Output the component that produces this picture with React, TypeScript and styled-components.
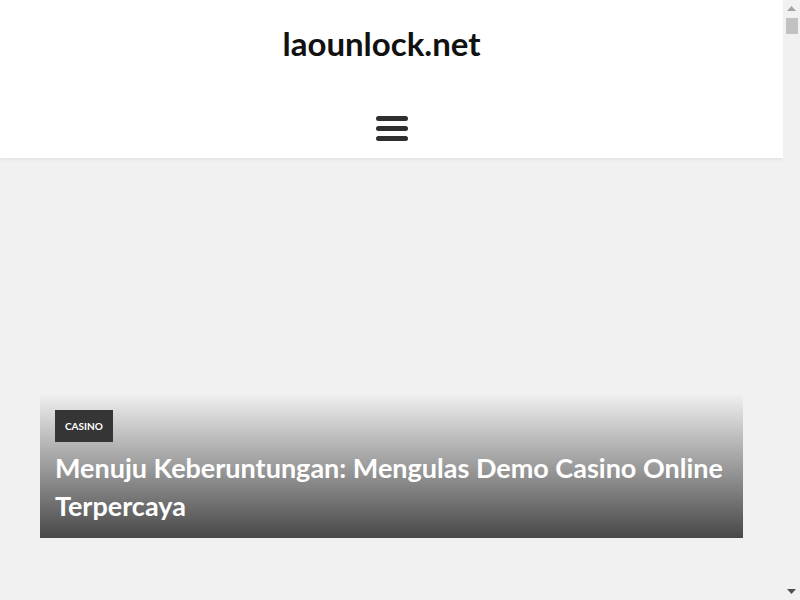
import React from "react";
import styled, { createGlobalStyle } from "styled-components";

const Global = createGlobalStyle`
  html, body { margin: 0; padding: 0; }
  html::-webkit-scrollbar { display: none; }
  body {
    background: #f1f1f1;
    font-family: Lato, "Open Sans", Arial, sans-serif;
    color: #222;
  }
`;

const Page = styled.div`
  width: 783px;
`;

const Header = styled.header`
  background: #fff;
  height: 158px;
  box-shadow: 0 1px 4px rgba(0, 0, 0, 0.08);
  display: flex;
  flex-direction: column;
  align-items: center;
  position: relative;
  z-index: 1;
`;

const SiteTitle = styled.a`
  display: block;
  margin-top: 19px;
  padding-right: 20px;
  font-size: 33px;
  line-height: 48px;
  font-weight: 700;
  color: #111;
  text-decoration: none;
`;

const MenuButton = styled.button`
  margin-top: 47px;
  width: 32px;
  height: 28px;
  padding: 0;
  border: 0;
  background: transparent;
  display: flex;
  flex-direction: column;
  justify-content: center;
  gap: 5px;
  cursor: pointer;
`;

const Bar = styled.span`
  display: block;
  width: 32px;
  height: 5px;
  border-radius: 3px;
  background: #2f2f2f;
`;

const Main = styled.main`
  padding: 40px 40px 60px 40px;
  display: flex;
  flex-direction: column;
  gap: 40px;
`;

const Card = styled.article`
  height: 340px;
  display: flex;
  flex-direction: column;
  justify-content: flex-end;
`;

const Caption = styled.div`
  padding: 17px 15px 13px 15px;
  background: linear-gradient(to bottom, rgba(0, 0, 0, 0) 0%, rgba(0, 0, 0, 0.7) 100%);
`;

const Badge = styled.a`
  display: inline-block;
  background: #353535;
  color: #fff;
  font-size: 10px;
  font-weight: 700;
  line-height: 32px;
  padding: 0 10px;
  text-transform: uppercase;
  text-decoration: none;
`;

const PostTitle = styled.h2`
  margin: 7px 0 0 0;
  font-size: 27px;
  line-height: 38px;
  font-weight: 700;
  color: #fff;
`;

/* Classic window scrollbar, drawn over the right edge of the viewport */
const ScrollRail = styled.div`
  position: fixed;
  top: 0;
  right: 0;
  width: 17px;
  height: 100vh;
  background: #f1f1f1;
  display: flex;
  flex-direction: column;
  align-items: center;
  z-index: 10;
`;

const ScrollButton = styled.div`
  width: 17px;
  height: 17px;
  display: flex;
  align-items: center;
  justify-content: center;
  flex: none;
`;

const ScrollTrack = styled.div`
  flex: 1;
  width: 17px;
  display: flex;
  justify-content: center;
`;

const ScrollThumb = styled.div`
  width: 12px;
  height: 16px;
  margin-top: 1px;
  background: #c1c1c1;
`;

const posts = [
  { cat: "Casino", title: "Menuju Keberuntungan: Mengulas Demo Casino Online Terpercaya" },
];

export default function App() {
  return (
    <>
      <Global />
      <Page>
        <Header>
          <SiteTitle href="#">laounlock.net</SiteTitle>
          <MenuButton aria-label="Menu">
            <Bar />
            <Bar />
            <Bar />
          </MenuButton>
        </Header>
        <Main>
          {posts.map((p, i) => (
            <Card key={i}>
              <Caption>
                <Badge href="#">{p.cat}</Badge>
                <PostTitle>{p.title}</PostTitle>
              </Caption>
            </Card>
          ))}
        </Main>
      </Page>
      <ScrollRail>
        <ScrollButton>
          <svg width="9" height="5" viewBox="0 0 9 5">
            <polygon points="4.5,0 9,5 0,5" fill="#a3a3a3" />
          </svg>
        </ScrollButton>
        <ScrollTrack>
          <ScrollThumb />
        </ScrollTrack>
        <ScrollButton>
          <svg width="9" height="5" viewBox="0 0 9 5">
            <polygon points="0,0 9,0 4.5,5" fill="#505050" />
          </svg>
        </ScrollButton>
      </ScrollRail>
    </>
  );
}
